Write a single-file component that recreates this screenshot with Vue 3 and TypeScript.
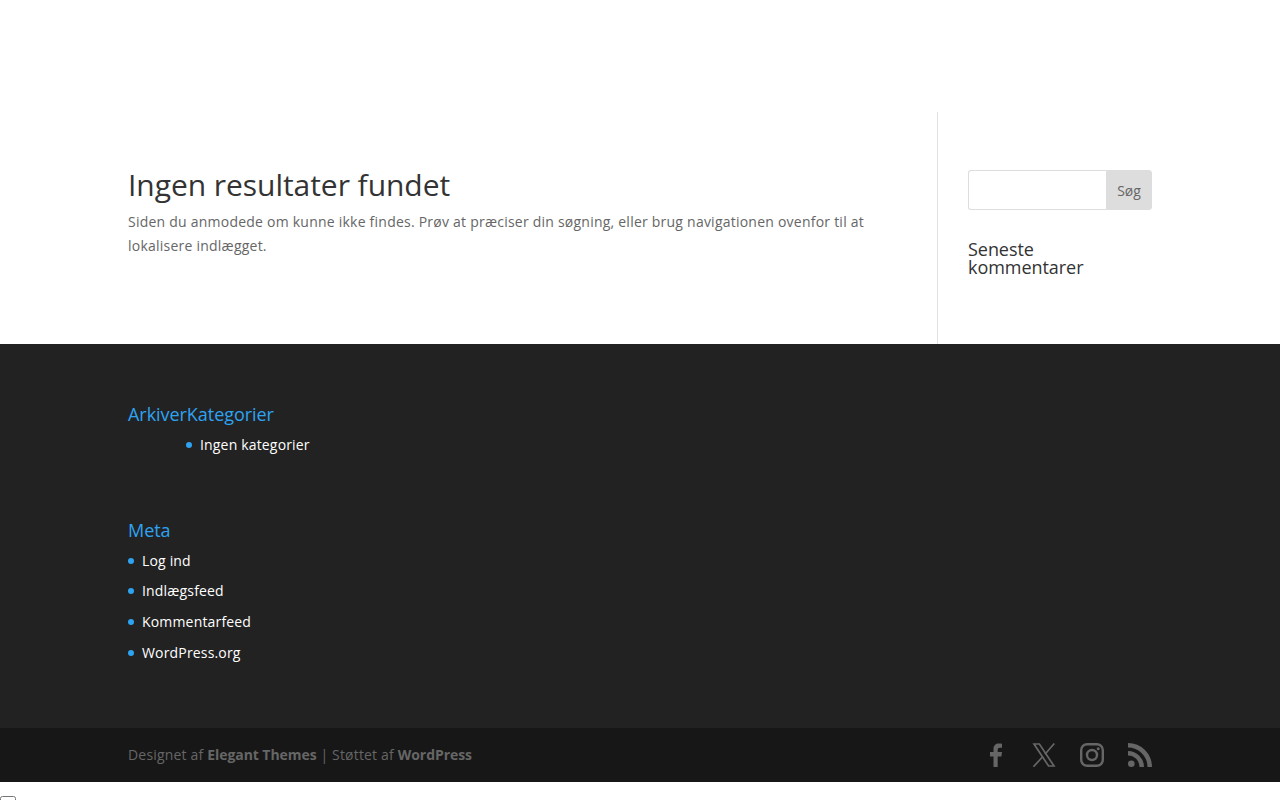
<script setup lang="ts">
const metaLinks: string[] = ['Log ind', 'Indlægsfeed', 'Kommentarfeed', 'WordPress.org']
</script>

<template>
  <div class="page">
    <div class="content">
      <div class="container">
        <main class="main">
          <h1>Ingen resultater fundet</h1>
          <p>Siden du anmodede om kunne ikke findes. Prøv at præciser din søgning, eller brug navigationen ovenfor til at lokalisere indlægget.</p>
        </main>
        <aside class="side">
          <form class="search" @submit.prevent>
            <input class="search-input" type="text" />
            <button class="search-btn" type="button">Søg</button>
          </form>
          <h4>Seneste<br />kommentarer</h4>
        </aside>
      </div>
    </div>
    <footer class="footer">
      <div class="widgets">
        <div class="widget first">
          <h4 class="fhead">ArkiverKategorier</h4>
          <ul class="cats"><li><span class="dot"></span>Ingen kategorier</li></ul>
        </div>
        <div class="widget">
          <h4 class="fhead">Meta</h4>
          <ul class="meta">
            <li v-for="item in metaLinks" :key="item"><span class="dot"></span>{{ item }}</li>
          </ul>
        </div>
      </div>
      <div class="bottom">
        <div class="bottom-inner">
          <div class="credit">Designet af <b>Elegant Themes</b> | Støttet af <b>WordPress</b></div>
          <div class="social">
            <svg class="ic" width="24" height="24" viewBox="0 0 24 24"><path d="M9.500 24.500V13.500H6V9h3.500V6C9.500 2.400 11.700.5 14.800.5c1.300 0 2.500.1 3.200.2v4h-2c-1.700 0-2.300.8-2.300 2.200V9H18l-.6 4.500h-3.700v11z" fill="#666"/></svg>
            <svg class="ic" width="24" height="24" viewBox="0 0 24 24"><path d="M2 1h5.400l14.600 22h-5.400z" fill="none" stroke="#666" stroke-width="1.700"/><path d="M22.300.5 13 11.200M10.900 13.500 1.400 23.800" fill="none" stroke="#666" stroke-width="1.700"/></svg>
            <svg class="ic" width="24" height="24" viewBox="0 0 24 24"><rect x="1.200" y="1.200" width="21.600" height="21.600" rx="6" fill="none" stroke="#666" stroke-width="2.400"/><circle cx="12" cy="12" r="5" fill="none" stroke="#666" stroke-width="2.400"/><circle cx="18.200" cy="5.800" r="1.500" fill="#666"/></svg>
            <svg class="ic" width="24" height="24" viewBox="0 0 24 24"><circle cx="3.300" cy="20.700" r="3.300" fill="#666"/><path d="M0 8v4.500a11.500 11.500 0 0 1 11.500 11.500H16A16 16 0 0 0 0 8z" fill="#666"/><path d="M0 0v4.500A19.500 19.500 0 0 1 19.500 24H24A24 24 0 0 0 0 0z" fill="#666"/></svg>
          </div>
        </div>
      </div>
    </footer>
    <input class="stray" type="checkbox" />
  </div>
</template>

<style>
html, body { margin: 0; padding: 0; background: #fff; overflow: hidden; }
</style>

<style scoped>
.page { font-family: "Open Sans", sans-serif; font-size: 14px; color: #666; height: 800px; overflow: hidden; }
.content { padding-top: 112px; background: #fff; }
.container { width: 1024px; margin: 0 auto; display: flex; height: 232px; }
.main { width: 810px; flex: none; box-sizing: border-box; padding: 58px 60px 0 0; border-right: 1px solid #e2e2e2; }
h1 { margin: 0; font-size: 30px; font-weight: 400; line-height: 30px; padding-bottom: 10px; color: #333; letter-spacing: -.05px; }
p { margin: 0; line-height: 24px; font-size: 14px; letter-spacing: .23px; }
.side { width: 214px; flex: none; box-sizing: border-box; padding: 58px 0 0 30px; }
.search { display: flex; height: 40px; }
.search-input { flex: 1; min-width: 0; box-sizing: border-box; height: 40px; margin: 0; border: 1px solid #ddd; border-right: 0; border-radius: 3px 0 0 3px; background: #fff; }
.search-btn { width: 46px; flex: none; height: 40px; padding: 0; border: 1px solid #ddd; border-radius: 0 3px 3px 0; background: #ddd; color: #666; font: 14px "Open Sans", sans-serif; }
.side h4 { margin: 30px 0 0; font-size: 18px; font-weight: 400; line-height: 18px; color: #333; letter-spacing: -.05px; }
.footer { background: #222; }
.widgets { width: 1024px; margin: 0 auto; padding-top: 59px; height: 384px; box-sizing: border-box; }
.widget.first { height: 116px; }
.fhead { margin: 0; font-size: 18px; font-weight: 400; line-height: 22px; color: #2ea3f2; letter-spacing: -.05px; }
ul { list-style: none; margin: 0; padding: 0; color: #fff; letter-spacing: .17px; }
li { display: flex; align-items: center; height: 24px; line-height: 24px; margin-bottom: 6.700px; }
.cats { padding: 8px 0 0 58px; }
.meta { padding-top: 7.700px; }
.dot { width: 6px; height: 6px; border-radius: 50%; background: #2ea3f2; margin-right: 8px; flex: none; }
.bottom { background: #171717; height: 54px; }
.bottom-inner { width: 1024px; height: 54px; margin: 0 auto; display: flex; justify-content: space-between; align-items: center; }
.credit { color: #666; letter-spacing: .18px; position: relative; top: -1px; }
.credit b { font-weight: 700; letter-spacing: -.06px; }
.social { display: flex; align-items: center; gap: 24px; }
.stray { position: absolute; left: 0; top: 796px; margin: 0; width: 16px; height: 16px; }
</style>
